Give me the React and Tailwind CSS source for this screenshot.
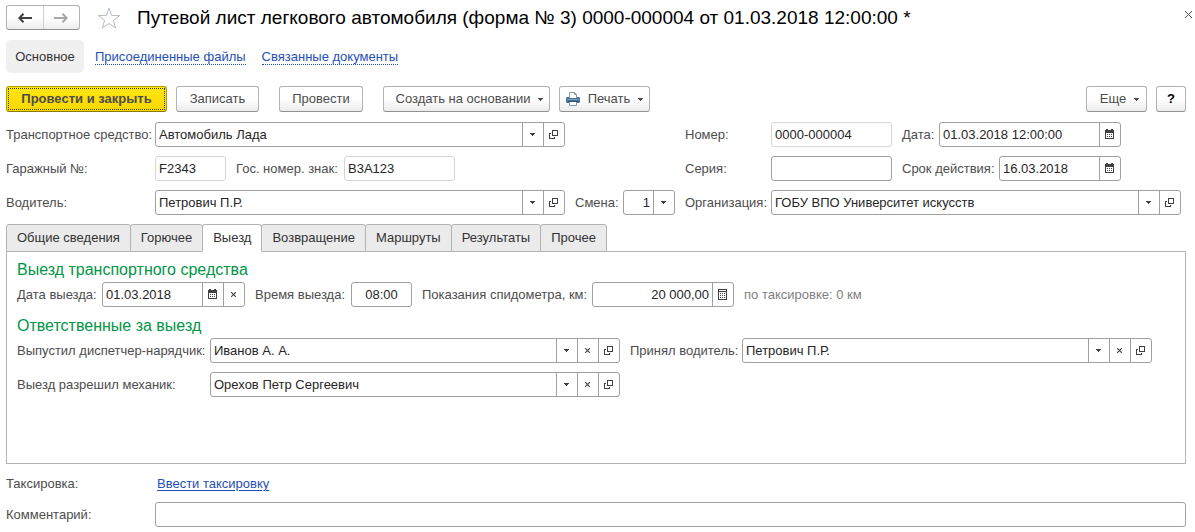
import { useId, useState } from 'react'
import clsx from 'clsx'

const TABS = ['Общие сведения', 'Горючее', 'Выезд', 'Возвращение', 'Маршруты', 'Результаты', 'Прочее']

function CaretIcon() {
  return (
    <svg width="5" height="3" viewBox="0 0 5 3" shapeRendering="crispEdges" fill="currentColor" aria-hidden="true">
      <path d="M0 0h5v1H0zM1 1h3v1H1zM2 2h1v1H2z" />
    </svg>
  )
}

function OpenIcon() {
  return (
    <svg width="9" height="9" viewBox="0 0 9 9" shapeRendering="crispEdges" fill="currentColor" aria-hidden="true">
      <path d="M3 0h6v6H3zM4 1v4h4V1z" fillRule="evenodd" />
      <path d="M0 3h2v1H1v4h4v-1h1v2H0z" />
    </svg>
  )
}

function ClearIcon() {
  return (
    <svg width="5" height="5" viewBox="0 0 5 5" stroke="currentColor" strokeWidth="1.1" aria-hidden="true">
      <path d="M0 0l5 5M5 0L0 5" />
    </svg>
  )
}

function CalendarIcon() {
  return (
    <svg width="9" height="11" viewBox="0 0 9 11" shapeRendering="crispEdges" fill="currentColor" aria-hidden="true">
      <path d="M1 0h2v1h3V0h2v1h1v9H0V1h1zM1 4v5h7V4z" fillRule="evenodd" />
      <path d="M2 5h1v1H2zM4 5h1v1H4zM6 5h1v1H6zM2 7h1v1H2zM4 7h1v1H4zM6 7h1v1H6z" />
    </svg>
  )
}

function CalculatorIcon() {
  return (
    <svg width="9" height="11" viewBox="0 0 9 11" shapeRendering="crispEdges" fill="currentColor" aria-hidden="true">
      <path d="M0 0h9v11H0zM1 1v1h7V1zM1 3v7h7V3z" fillRule="evenodd" />
      <path d="M2 4h1v1H2zM4 4h1v1H4zM6 4h1v1H6zM2 6h1v1H2zM4 6h1v1H4zM6 6h1v1H6zM2 8h1v1H2zM4 8h1v1H4zM6 8h1v1H6z" />
    </svg>
  )
}

function ArrowIcon({ flip }) {
  return (
    <svg
      width="14"
      height="10"
      viewBox="0 0 14 10"
      fill="none"
      stroke="currentColor"
      strokeWidth="2"
      className={clsx(flip && 'rotate-180')}
      aria-hidden="true"
    >
      <path d="M1.5 5H14M5.5 0.8L1.4 5l4.1 4.2" />
    </svg>
  )
}

function StarIcon() {
  return (
    <svg width="24" height="22" viewBox="0 0 24 22" fill="none" stroke="#b4bcc4" strokeWidth="1" aria-hidden="true">
      <path d="M12 1.2l2.7 7.2 8 .2-6.3 4.8 2.3 7.6-6.7-4.5L5.3 21l2.3-7.6L1.3 8.6l8-.2z" />
    </svg>
  )
}

function PrinterIcon() {
  return (
    <svg width="14" height="14" viewBox="0 0 14 14" aria-hidden="true">
      <path d="M3.5 6V.5h5l2 2V6" fill="#fff" stroke="#8598aa" />
      <path d="M8.5.5v2h2" fill="none" stroke="#8598aa" />
      <path d="M1 5h2v1h8V5h2l1 1v4l-1 1H1l-1-1V6z" fill="#45719a" />
      <path d="M1 7.5h12" stroke="#7f9fbb" />
      <path d="M2 9.5h10" stroke="#2e5378" />
      <path d="M3.5 10v3.5h7V10" fill="#fff" stroke="#8598aa" />
    </svg>
  )
}

const ICONS = {
  list: [CaretIcon, 'Выбрать из списка'],
  open: [OpenIcon, 'Открыть'],
  clear: [ClearIcon, 'Очистить'],
  calendar: [CalendarIcon, 'Календарь'],
  calculator: [CalculatorIcon, 'Калькулятор'],
}

function Button({ className, children, ...props }) {
  return (
    <button
      type="button"
      className={clsx(
        'flex h-[26px] shrink-0 items-center justify-center rounded-[3px] border border-[#b3b3b3] border-b-[#909090] bg-linear-to-b from-white from-50% to-[#ececec] text-[#4d4d4d]',
        className
      )}
      {...props}
    >
      {children}
    </button>
  )
}

function Label({ className, ...props }) {
  return <label className={clsx('shrink-0 whitespace-nowrap text-[#4d4d4d]', className)} {...props} />
}

function Field({ id, value, buttons = [], readOnly, align, className }) {
  const [text, setText] = useState(value)

  return (
    <div
      className={clsx(
        'flex h-[25px] min-w-0 rounded-[3px] border bg-white',
        readOnly ? 'border-[#d6d6d6]' : 'border-[#a0a0a0]',
        className
      )}
    >
      <input
        id={id}
        type="text"
        value={text}
        readOnly={readOnly}
        onChange={(e) => setText(e.target.value)}
        className={clsx(
          'w-full min-w-0 flex-1 bg-transparent px-[3px] text-[#262626] outline-none',
          align === 'right' && 'text-right',
          align === 'center' && 'text-center'
        )}
      />
      {buttons.map((name) => {
        const [Icon, title] = ICONS[name]
        return (
          <button
            key={name}
            type="button"
            aria-label={title}
            onClick={name === 'clear' ? () => setText('') : undefined}
            className="flex w-[21px] shrink-0 items-center justify-center border-l border-[#a0a0a0] pr-px text-[#404040]"
          >
            <Icon />
          </button>
        )
      })}
    </div>
  )
}

// label of a fixed width followed by its field
function LabeledField({ label, labelClass, ...field }) {
  const id = useId()
  return (
    <>
      <Label htmlFor={id} className={labelClass}>{label}</Label>
      <Field id={id} {...field} />
    </>
  )
}

function Header() {
  return (
    <header className="-mr-[7px] flex h-[25px] items-center">
      <div className="flex h-[25px] w-[74px] shrink-0 rounded-[3px] border border-[#b3b3b3] border-b-[#909090] bg-linear-to-b from-white from-50% to-[#ececec]">
        <button type="button" aria-label="Назад" className="flex flex-1 items-center justify-center text-[#404040]">
          <ArrowIcon />
        </button>
        <button
          type="button"
          aria-label="Вперед"
          className="flex flex-1 items-center justify-center border-l border-[#d0d0d0] text-[#a6a6a6]"
        >
          <ArrowIcon flip />
        </button>
      </div>
      <button type="button" aria-label="В избранное" className="ml-[17px] shrink-0">
        <StarIcon />
      </button>
      <h1 className="ml-4 flex-1 text-[19px] leading-6 whitespace-nowrap text-black">
        Путевой лист легкового автомобиля (форма № 3) 0000-000004 от 01.03.2018 12:00:00 *
      </h1>
      <button type="button" aria-label="Закрыть" className="mb-1.5 p-px text-[#4d4d4d]">
        <svg width="7" height="7" viewBox="0 0 7 7" stroke="currentColor" aria-hidden="true">
          <path d="M0 0l7 7M7 0L0 7" />
        </svg>
      </button>
    </header>
  )
}

function Navigation() {
  const link = 'border-b border-dotted border-[#1f4fb5] pt-0.5 leading-[14px] text-[#1f4fb5]'
  return (
    <nav className="mt-2.5 flex h-[33px] items-center">
      <span className="mr-[11px] flex h-full w-[78px] items-center justify-center rounded-[5px] bg-[#f0f0f0] pt-px text-[#333]">
        Основное
      </span>
      <a href="#files" className={link}>Присоединенные файлы</a>
      <a href="#related" className={clsx(link, 'ml-4')}>Связанные документы</a>
    </nav>
  )
}

function Toolbar() {
  return (
    <div className="mt-[13px] flex items-center">
      <button
        type="button"
        className="h-[26px] w-[161px] shrink-0 rounded-[3px] border border-[#b39b00] border-b-[#8c7900] bg-linear-to-b from-[#ffe712] to-[#f7d700] p-px font-bold text-[#4d4d4d]"
      >
        <span className="flex h-full items-center justify-center border border-dotted border-[#3a3a3a]">
          Провести и закрыть
        </span>
      </button>
      <Button className="ml-[9px] w-[83px]">Записать</Button>
      <Button className="ml-5 w-[84px]">Провести</Button>
      <Button className="ml-5 w-[167px] gap-2 pl-1.5">
        Создать на основании
        <CaretIcon />
      </Button>
      <Button className="ml-[9px] w-[91px] gap-2">
        <PrinterIcon />
        Печать
        <CaretIcon />
      </Button>
      <Button className="ml-auto w-[61px] gap-2 pl-1.5">
        Еще
        <CaretIcon />
      </Button>
      <Button className="ml-[9px] w-[30px] font-bold text-black" aria-label="Справка">?</Button>
    </div>
  )
}

function DocumentFields() {
  return (
    <div className="mt-2.5 grid grid-cols-[669fr_501fr] gap-x-2.5">
      <div className="grid grid-cols-[149px_1fr_110px] items-center gap-y-[9px]">
        <LabeledField label="Транспортное средство:" value="Автомобиль Лада" buttons={['list', 'open']} />
        <span />
        <Label htmlFor="garage-number">Гаражный №:</Label>
        <div className="flex items-center">
          <Field id="garage-number" value="F2343" readOnly className="w-[71px]" />
          <LabeledField
            label="Гос. номер. знак:"
            labelClass="ml-2.5 w-[108px]"
            value="В3А123"
            readOnly
            className="w-[111px]"
          />
        </div>
        <span />
        <LabeledField label="Водитель:" value="Петрович П.Р." buttons={['list', 'open']} />
        <div className="flex items-center pl-2.5">
          <LabeledField
            label="Смена:"
            labelClass="w-12"
            value="1"
            align="right"
            buttons={['list']}
            className="w-[52px]"
          />
        </div>
      </div>

      <div className="flex flex-col gap-[9px] pr-[5px]">
        <div className="flex items-center">
          <LabeledField label="Номер:" labelClass="w-[86px]" value="0000-000004" readOnly className="w-[121px]" />
          <LabeledField
            label="Дата:"
            labelClass="ml-2.5 w-[37px]"
            value="01.03.2018 12:00:00"
            buttons={['calendar']}
            className="w-[182px]"
          />
        </div>
        <div className="flex items-center">
          <LabeledField label="Серия:" labelClass="w-[86px]" value="" className="w-[121px]" />
          <LabeledField
            label="Срок действия:"
            labelClass="ml-2.5 w-[97px]"
            value="16.03.2018"
            buttons={['calendar']}
            className="w-[122px]"
          />
        </div>
        <div className="flex items-center">
          <LabeledField
            label="Организация:"
            labelClass="w-[86px]"
            value="ГОБУ ВПО Университет искусств"
            buttons={['list', 'open']}
            className="flex-1"
          />
        </div>
      </div>
    </div>
  )
}

function DeparturePanel() {
  const heading = 'mb-0.5 text-[16px] leading-5 text-[#009646]'
  const person = ['list', 'clear', 'open']
  return (
    <div role="tabpanel" className="-mt-px min-h-[213px] border border-[#b3b3b3] px-2.5 pt-2">
      <h2 className={heading}>Выезд транспортного средства</h2>
      <div className="flex items-center">
        <LabeledField
          label="Дата выезда:"
          labelClass="w-[85px]"
          value="01.03.2018"
          buttons={['calendar', 'clear']}
          className="w-[143px]"
        />
        <LabeledField
          label="Время выезда:"
          labelClass="ml-2.5 w-24"
          value="08:00"
          align="center"
          className="w-[61px]"
        />
        <LabeledField
          label="Показания спидометра, км:"
          labelClass="ml-2.5 w-[170px]"
          value="20 000,00"
          align="right"
          buttons={['calculator']}
          className="w-[142px]"
        />
        <span className="ml-2.5 text-[#808080]">по таксировке: 0 км</span>
      </div>

      <h2 className={clsx(heading, 'mt-[9px]')}>Ответственные за выезд</h2>
      <div className="grid grid-cols-[193px_1fr_122px_1fr] items-center gap-y-[9px] pr-[23px]">
        <LabeledField label="Выпустил диспетчер-нарядчик:" value="Иванов А. А." buttons={person} />
        <LabeledField label="Принял водитель:" labelClass="pl-2.5" value="Петрович П.Р." buttons={person} />
        <LabeledField label="Выезд разрешил механик:" value="Орехов Петр Сергеевич" buttons={person} />
      </div>
    </div>
  )
}

export default function App() {
  const [tab, setTab] = useState('Выезд')

  return (
    <div className="bg-white pt-[5px] pr-[9px] pb-1 pl-1.5 font-['Liberation_Sans',Arial,sans-serif] text-[13px] leading-4">
      <Header />
      <Navigation />
      <Toolbar />
      <DocumentFields />

      <div role="tablist" className="mt-[9px] flex">
        {TABS.map((name) => (
          <button
            key={name}
            type="button"
            role="tab"
            aria-selected={name === tab}
            onClick={() => setTab(name)}
            className={clsx(
              'relative -mr-px h-7 rounded-t-[3px] border border-[#b3b3b3] px-2.5 whitespace-nowrap text-[#333]',
              name === tab ? 'z-10 border-b-white bg-white' : 'bg-[#ebebeb]'
            )}
          >
            {name}
          </button>
        ))}
      </div>
      <DeparturePanel />

      <div className="mt-2.5 flex h-5 items-center">
        <span className="w-[151px] text-[#4d4d4d]">Таксировка:</span>
        <a href="#taxation" className="text-[#1f4fb5] underline underline-offset-2">Ввести таксировку</a>
      </div>
      <div className="mt-2 flex items-center">
        <LabeledField label="Комментарий:" labelClass="w-[149px]" value="" className="flex-1" />
      </div>
    </div>
  )
}
